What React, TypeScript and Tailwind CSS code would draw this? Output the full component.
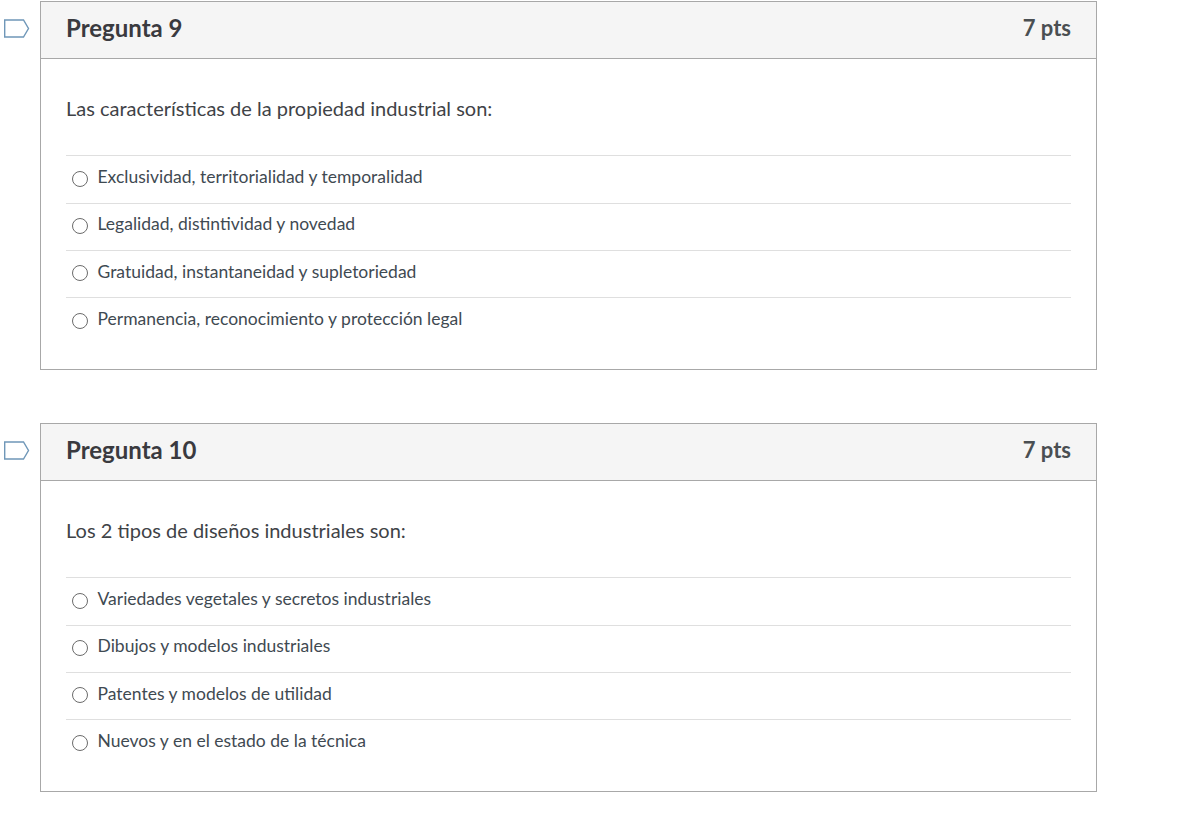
const questions = [
  {
    title: "Pregunta 9",
    text: "Las características de la propiedad industrial son:",
    answers: [
      "Exclusividad, territorialidad y temporalidad",
      "Legalidad, distintividad y novedad",
      "Gratuidad, instantaneidad y supletoriedad",
      "Permanencia, reconocimiento y protección legal",
    ],
  },
  {
    title: "Pregunta 10",
    text: "Los 2 tipos de diseños industriales son:",
    answers: [
      "Variedades vegetales y secretos industriales",
      "Dibujos y modelos industriales",
      "Patentes y modelos de utilidad",
      "Nuevos y en el estado de la técnica",
    ],
  },
];

function Flag() {
  return (
    <svg width="26" height="19" viewBox="0 0 26 19" fill="none" className="shrink-0 ml-[4px] mt-[18px]">
      <path d="M0.7 1H19.5L24.5 9.5L19.5 18H0.7Z" stroke="#6f97b8" strokeWidth="1.4" fill="#fff" />
    </svg>
  );
}

export default function App() {
  return (
    <div className="w-[1192px] h-[838px] bg-white pt-px text-[#2d3b45] overflow-hidden font-['Lato','Liberation_Sans',sans-serif]">
      {questions.map((q) => (
        <div key={q.title} className="flex mb-[53px]">
          <div className="w-[40px] shrink-0">
            <Flag />
          </div>
          <div className="w-[1057px] h-[369px] border border-[#a8a8a8]">
            {/* Header */}
            <div className="h-[57px] flex items-center justify-between pl-[25px] pr-[25px] pb-[4px] bg-[#f5f5f5] border-b border-[#a8a8a8] text-[#3a3a3f] font-bold">
              <h2 className="text-[24px]">{q.title}</h2>
              <span className="text-[22px] text-[#4a4f52] mb-[2px]">7 pts</span>
            </div>
            {/* Body */}
            <div className="px-[25px] pt-[35px]">
              <p className="text-[20px] leading-[28px] text-[#3f4347] mb-[33.4px]">{q.text}</p>
              <div>
                {q.answers.map((a) => (
                  <div key={a} className="h-[47.33px] flex items-center border-t border-[#dfdfdf] pl-[6px] gap-[9.5px] pb-[5px]">
                    <span className="w-[16px] h-[16px] mt-[3px] rounded-full border-[1.5px] border-[#6b6b6b] bg-white shrink-0" />
                    <span className="text-[17.5px] text-[#3f4a52]">{a}</span>
                  </div>
                ))}
              </div>
            </div>
          </div>
        </div>
      ))}
    </div>
  );
}
